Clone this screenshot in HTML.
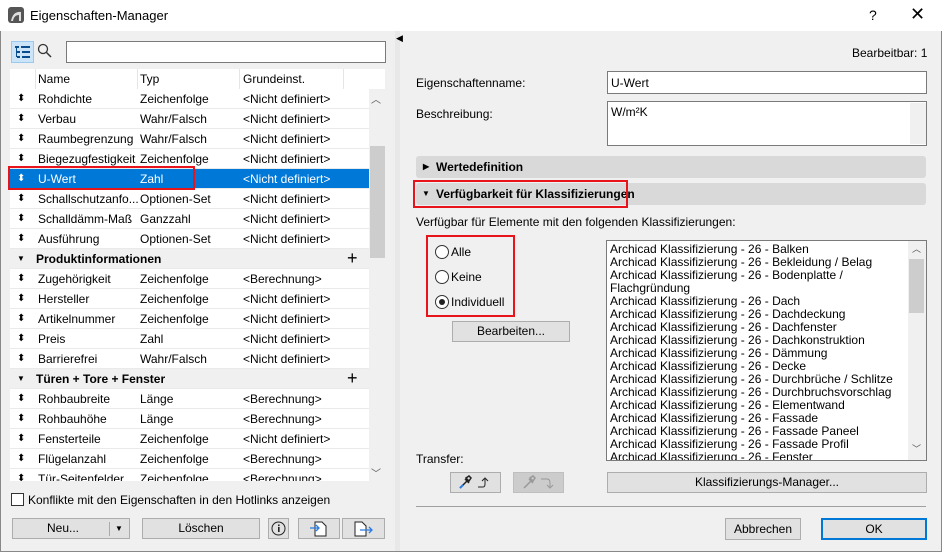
<!DOCTYPE html>
<html><head><meta charset="utf-8"><style>
*{box-sizing:border-box;margin:0;padding:0}
body{width:942px;height:552px;background:#f0f0f0;font-family:"Liberation Sans",sans-serif;font-size:12px;color:#000;position:relative;overflow:hidden}
.a{position:absolute}
.title{left:0;top:0;width:942px;height:31px;background:#fff}
.list{left:10px;top:69px;width:359px;height:412px;background:#fff;overflow:hidden}
.row{position:absolute;left:0;width:359px;height:20px;border-bottom:1px solid #eaeaea;line-height:21px;white-space:nowrap}
.row span{position:absolute}
.row .ar{left:7px;font-size:10px;line-height:20px}
.row .n{left:28px}.row .t{left:130px}.row .g{left:233px}
.grp{background:#f0f0f0;font-weight:bold}
.sel{background:#0078d7;color:#fff}
.btn{position:absolute;background:#e1e1e1;border:1px solid #adadad;text-align:center;line-height:19px}
.inp{position:absolute;background:#fff;border:1px solid #7a7a7a}
.bar{position:absolute;left:416px;width:510px;height:22px;background:#d9d9d9;border-radius:3px;font-weight:bold;line-height:22px;padding-left:20px}
.red{position:absolute;border:2px solid #e8141b}
.rad{position:absolute;width:14px;height:14px;border:1px solid #333;border-radius:50%;background:#fff}
</style></head><body>
<div class="a title"></div>
<svg class="a" style="left:8px;top:7px" width="16" height="16"><rect width="16" height="16" rx="3" fill="#555"/><path d="M3 14 Q5 4 13 5 L13 14 L11 14 L11 8 Q6 8 5 14Z" fill="#ddd"/></svg>
<div class="a" style="left:30px;top:8px;font-size:13px">Eigenschaften-Manager</div>
<div class="a" style="left:869px;top:7px;font-size:14px">?</div>
<div class="a" style="left:910px;top:4px;font-size:18px">✕</div>

<div class="a" style="left:11px;top:41px;width:23px;height:22px;background:#cce4f7;border:1px solid #99c9ef"></div>
<svg class="a" style="left:14px;top:45px" width="17" height="14"><g fill="#0a4c8c"><rect x="1" y="1" width="4" height="2"/><rect x="7" y="1" width="9" height="2"/><rect x="3" y="6" width="3" height="2"/><rect x="8" y="6" width="8" height="2"/><rect x="3" y="11" width="3" height="2"/><rect x="8" y="11" width="8" height="2"/><rect x="2" y="3" width="1" height="9"/></g></svg>
<svg class="a" style="left:37px;top:43px" width="16" height="16"><circle cx="6" cy="6" r="4.5" fill="none" stroke="#333" stroke-width="1.3"/><line x1="9.5" y1="9.5" x2="14" y2="14" stroke="#333" stroke-width="1.5"/></svg>
<div class="inp" style="left:66px;top:41px;width:320px;height:22px"></div>

<div class="list a">
<div class="row" style="top:0;background:#fff;border-bottom:none"><span class="n">Name</span><span class="t">Typ</span><span class="g">Grundeinst.</span>
<span style="left:25px;top:0;width:1px;height:20px;background:#e5e5e5"></span><span style="left:127px;top:0;width:1px;height:20px;background:#e5e5e5"></span><span style="left:229px;top:0;width:1px;height:20px;background:#e5e5e5"></span><span style="left:333px;top:0;width:1px;height:20px;background:#e5e5e5"></span></div>
<div class="row" style="top:20px"><span class="ar">⬍</span><span class="n">Rohdichte</span><span class="t">Zeichenfolge</span><span class="g">&lt;Nicht definiert&gt;</span></div>
<div class="row" style="top:40px"><span class="ar">⬍</span><span class="n">Verbau</span><span class="t">Wahr/Falsch</span><span class="g">&lt;Nicht definiert&gt;</span></div>
<div class="row" style="top:60px"><span class="ar">⬍</span><span class="n">Raumbegrenzung</span><span class="t">Wahr/Falsch</span><span class="g">&lt;Nicht definiert&gt;</span></div>
<div class="row" style="top:80px"><span class="ar">⬍</span><span class="n">Biegezugfestigkeit</span><span class="t">Zeichenfolge</span><span class="g">&lt;Nicht definiert&gt;</span></div>
<div class="row sel" style="top:100px"><span class="ar">⬍</span><span class="n">U-Wert</span><span class="t">Zahl</span><span class="g">&lt;Nicht definiert&gt;</span></div>
<div class="row" style="top:120px"><span class="ar">⬍</span><span class="n">Schallschutzanfo...</span><span class="t">Optionen-Set</span><span class="g">&lt;Nicht definiert&gt;</span></div>
<div class="row" style="top:140px"><span class="ar">⬍</span><span class="n">Schalldämm-Maß</span><span class="t">Ganzzahl</span><span class="g">&lt;Nicht definiert&gt;</span></div>
<div class="row" style="top:160px"><span class="ar">⬍</span><span class="n">Ausführung</span><span class="t">Optionen-Set</span><span class="g">&lt;Nicht definiert&gt;</span></div>
<div class="row grp" style="top:180px"><span class="ar" style="font-size:8px">▼</span><span style="left:26px">Produktinformationen</span><span style="left:337px;font-weight:normal;font-size:18px;line-height:18px">+</span></div>
<div class="row" style="top:200px"><span class="ar">⬍</span><span class="n">Zugehörigkeit</span><span class="t">Zeichenfolge</span><span class="g">&lt;Berechnung&gt;</span></div>
<div class="row" style="top:220px"><span class="ar">⬍</span><span class="n">Hersteller</span><span class="t">Zeichenfolge</span><span class="g">&lt;Nicht definiert&gt;</span></div>
<div class="row" style="top:240px"><span class="ar">⬍</span><span class="n">Artikelnummer</span><span class="t">Zeichenfolge</span><span class="g">&lt;Nicht definiert&gt;</span></div>
<div class="row" style="top:260px"><span class="ar">⬍</span><span class="n">Preis</span><span class="t">Zahl</span><span class="g">&lt;Nicht definiert&gt;</span></div>
<div class="row" style="top:280px"><span class="ar">⬍</span><span class="n">Barrierefrei</span><span class="t">Wahr/Falsch</span><span class="g">&lt;Nicht definiert&gt;</span></div>
<div class="row grp" style="top:300px"><span class="ar" style="font-size:8px">▼</span><span style="left:26px">Türen + Tore + Fenster</span><span style="left:337px;font-weight:normal;font-size:18px;line-height:18px">+</span></div>
<div class="row" style="top:320px"><span class="ar">⬍</span><span class="n">Rohbaubreite</span><span class="t">Länge</span><span class="g">&lt;Berechnung&gt;</span></div>
<div class="row" style="top:340px"><span class="ar">⬍</span><span class="n">Rohbauhöhe</span><span class="t">Länge</span><span class="g">&lt;Berechnung&gt;</span></div>
<div class="row" style="top:360px"><span class="ar">⬍</span><span class="n">Fensterteile</span><span class="t">Zeichenfolge</span><span class="g">&lt;Nicht definiert&gt;</span></div>
<div class="row" style="top:380px"><span class="ar">⬍</span><span class="n">Flügelanzahl</span><span class="t">Zeichenfolge</span><span class="g">&lt;Berechnung&gt;</span></div>
<div class="row" style="top:400px"><span class="ar">⬍</span><span class="n">Tür-Seitenfelder</span><span class="t">Zeichenfolge</span><span class="g">&lt;Berechnung&gt;</span></div>
</div>
<div class="a" style="left:369px;top:69px;width:16px;height:20px;background:#fff"></div>
<div class="a" style="left:371px;top:91px;font-size:10px;color:#555">︿</div>
<div class="a" style="left:370px;top:146px;width:15px;height:112px;background:#cdcdcd"></div>
<div class="a" style="left:371px;top:465px;font-size:10px;color:#555">﹀</div>
<div class="red" style="left:8px;top:166px;width:187px;height:24px"></div>

<div class="a" style="left:11px;top:493px;width:13px;height:13px;border:1px solid #333;background:#fff"></div>
<div class="a" style="left:28px;top:493px">Konflikte mit den Eigenschaften in den Hotlinks anzeigen</div>
<div class="btn" style="left:12px;top:518px;width:118px;height:21px"><span style="position:absolute;left:34px">Neu...</span><span style="position:absolute;left:96px;top:3px;width:1px;height:14px;background:#aaa"></span><span style="position:absolute;left:102px;font-size:8px">▼</span></div>
<div class="btn" style="left:142px;top:518px;width:118px;height:21px">Löschen</div>
<div class="btn" style="left:268px;top:518px;width:21px;height:21px"><svg width="19" height="19" style="display:block"><circle cx="9.5" cy="9.5" r="6.5" fill="none" stroke="#222"/><rect x="9" y="8" width="1.6" height="5" fill="#222"/><rect x="9" y="5.5" width="1.6" height="1.6" fill="#222"/></svg></div>
<div class="btn" style="left:298px;top:518px;width:42px;height:21px"><svg width="40" height="19" style="display:block"><path d="M16 3h7l4 4v10h-11z" fill="#fff" stroke="#222"/><path d="M11 9h9M17 6l3 3-3 3" fill="none" stroke="#2a7ae2" stroke-width="1.3"/></svg></div>
<div class="btn" style="left:342px;top:518px;width:43px;height:21px"><svg width="41" height="19" style="display:block"><path d="M12 3h7l4 4v10h-11z" fill="#fff" stroke="#222"/><path d="M17 11h12M26 8l3 3-3 3" fill="none" stroke="#2a7ae2" stroke-width="1.3"/></svg></div>

<div class="a" style="left:395px;top:31px;width:5px;height:521px;background:#e8e8e8"></div>
<div class="a" style="left:396px;top:33px;font-size:9px">◀</div>
<div class="a" style="left:0;top:31px;width:1px;height:521px;background:#888"></div>
<div class="a" style="left:941px;top:31px;width:1px;height:521px;background:#888"></div>
<div class="a" style="left:0;top:551px;width:942px;height:1px;background:#888"></div>

<div class="a" style="left:852px;top:46px">Bearbeitbar: 1</div>
<div class="a" style="left:416px;top:76px">Eigenschaftenname:</div>
<div class="inp" style="left:607px;top:71px;width:320px;height:23px;padding:4px 3px">U-Wert</div>
<div class="a" style="left:416px;top:107px">Beschreibung:</div>
<div class="inp" style="left:607px;top:101px;width:320px;height:45px;padding:3px 3px">W/m²K<div class="a" style="left:302px;top:1px;width:16px;height:41px;background:#f0f0f0"></div></div>
<div class="bar" style="top:156px">Wertedefinition<span style="position:absolute;left:7px;font-size:8px">▶</span></div>
<div class="bar" style="top:183px">Verfügbarkeit für Klassifizierungen<span style="position:absolute;left:6px;font-size:8px">▼</span></div>
<div class="red" style="left:413px;top:180px;width:215px;height:28px"></div>
<div class="a" style="left:416px;top:215px">Verfügbar für Elemente mit den folgenden Klassifizierungen:</div>

<div class="rad" style="left:435px;top:245px"></div><div class="a" style="left:451px;top:245px">Alle</div>
<div class="rad" style="left:435px;top:270px"></div><div class="a" style="left:451px;top:270px">Keine</div>
<div class="rad" style="left:435px;top:295px"><div style="position:absolute;left:3px;top:3px;width:6px;height:6px;border-radius:50%;background:#222"></div></div><div class="a" style="left:451px;top:295px">Individuell</div>
<div class="red" style="left:426px;top:235px;width:89px;height:82px"></div>
<div class="btn" style="left:452px;top:321px;width:118px;height:21px">Bearbeiten...</div>

<div class="inp" style="left:606px;top:240px;width:321px;height:221px;overflow:hidden;padding:2px 3px;line-height:13px;white-space:nowrap">
Archicad Klassifizierung - 26 - Balken<br>Archicad Klassifizierung - 26 - Bekleidung / Belag<br>Archicad Klassifizierung - 26 - Bodenplatte /<br>Flachgründung<br>Archicad Klassifizierung - 26 - Dach<br>Archicad Klassifizierung - 26 - Dachdeckung<br>Archicad Klassifizierung - 26 - Dachfenster<br>Archicad Klassifizierung - 26 - Dachkonstruktion<br>Archicad Klassifizierung - 26 - Dämmung<br>Archicad Klassifizierung - 26 - Decke<br>Archicad Klassifizierung - 26 - Durchbrüche / Schlitze<br>Archicad Klassifizierung - 26 - Durchbruchsvorschlag<br>Archicad Klassifizierung - 26 - Elementwand<br>Archicad Klassifizierung - 26 - Fassade<br>Archicad Klassifizierung - 26 - Fassade Paneel<br>Archicad Klassifizierung - 26 - Fassade Profil<br>Archicad Klassifizierung - 26 - Fenster
<div class="a" style="left:301px;top:0;width:18px;height:219px;background:#f0f0f0"></div>
<div class="a" style="left:302px;top:18px;width:15px;height:54px;background:#cdcdcd"></div>
<div class="a" style="left:305px;top:2px;font-size:9px;color:#555">︿</div>
<div class="a" style="left:305px;top:202px;font-size:9px;color:#555">﹀</div>
</div>

<div class="a" style="left:416px;top:452px">Transfer:</div>
<div class="btn" style="left:450px;top:472px;width:51px;height:21px"><svg width="49" height="19" style="display:block"><path d="M9 15l7-7M14 6l4 4M15 5l3-2 2 2-2 3z" stroke="#222" fill="none" stroke-width="1.5"/><path d="M9 15l3-3" stroke="#2a7ae2" stroke-width="2"/><path d="M27 14h5q2 0 2-3v-5M31 8l3-3 3 3" fill="none" stroke="#222"/></svg></div>
<div class="btn" style="left:513px;top:472px;width:51px;height:21px;background:#ccc;border-color:#bfbfbf"><svg width="49" height="19" style="display:block"><path d="M10 15l7-7M15 6l4 4M16 5l3-2 2 2-2 3z" stroke="#999" fill="none" stroke-width="1.5"/><path d="M27 6h6q3 0 3 4v4M33 12l3 3 3-3" fill="none" stroke="#999"/></svg></div>
<div class="btn" style="left:607px;top:472px;width:320px;height:21px">Klassifizierungs-Manager...</div>
<div class="a" style="left:416px;top:506px;width:510px;height:1px;background:#a0a0a0"></div>
<div class="btn" style="left:725px;top:518px;width:76px;height:22px;line-height:20px">Abbrechen</div>
<div class="btn" style="left:821px;top:518px;width:106px;height:22px;border:2px solid #0078d7;line-height:18px">OK</div>
</body></html>
